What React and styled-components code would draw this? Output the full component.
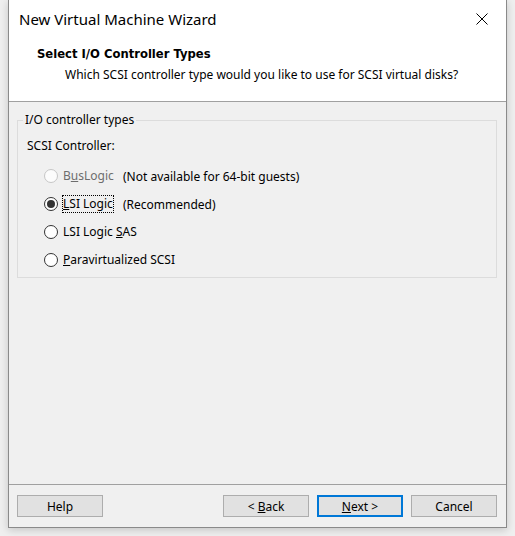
import React from 'react';
import styled, { createGlobalStyle } from 'styled-components';

const GlobalStyle = createGlobalStyle`
    html, body {
        margin: 0;
        padding: 0;
        background: #efefef;
    }
    body {
        font-family: "Noto Sans", "Liberation Sans", sans-serif;
        font-size: 12px;
        color: #000;
    }
`;

const Page = styled.div`
    height: 536px;
    padding-left: 8px;
    box-sizing: border-box;
`;

const Window = styled.div`
    width: 499px;
    height: 528px;
    box-sizing: border-box;
    display: flex;
    flex-direction: column;
    border: 1px solid #8a8a8a;
    border-top: none;
    background: #f0f0f0;
    box-shadow: 0 2px 8px rgba(0, 0, 0, 0.18);
`;

const TitleBar = styled.div`
    height: 38px;
    display: flex;
    align-items: center;
    justify-content: space-between;
    padding-left: 10px;
    background: #fff;
`;

const TitleText = styled.span`
    font-size: 15px;
    color: #000;
`;

const CloseButton = styled.div`
    width: 46px;
    height: 38px;
    display: flex;
    align-items: center;
    justify-content: center;
    margin-right: 1px;
`;

const Header = styled.div`
    height: 64px;
    background: #fff;
    border-bottom: 1px solid #a0a0a0;
    padding-top: 7px;
    box-sizing: border-box;
`;

const HeaderTitle = styled.div`
    font-family: "DejaVu Sans", sans-serif;
    font-weight: bold;
    font-size: 11.6px;
    padding-left: 28px;
    height: 18px;
    line-height: 18px;
`;

const HeaderSub = styled.div`
    padding-left: 56px;
    margin-top: 3px;
    line-height: 18px;
`;

const Body = styled.div`
    flex: 1;
    padding: 10px 9px 0 8px;
`;

const Group = styled.fieldset`
    margin: 0;
    padding: 0 0 8px 9px;
    height: 166px;
    box-sizing: border-box;
    border: 1px solid #dcdcdc;
`;

const Legend = styled.legend`
    padding: 0 2px;
    margin-left: -4px;
    line-height: 16px;
`;

const GroupLabel = styled.div`
    margin-top: 10px;
    line-height: 16px;
    margin-bottom: 8px;
`;

const OptionRow = styled.div`
    display: flex;
    align-items: center;
    height: 28px;
    margin-left: 17px;
    color: ${p => (p.$disabled ? '#6d6d6d' : '#000')};
`;

const Radio = styled.span`
    width: 14px;
    height: 14px;
    border-radius: 50%;
    box-sizing: border-box;
    border: 1px solid ${p => (p.$disabled ? '#c6c6c6' : '#333')};
    background: ${p => (p.$disabled ? '#fcfcfc' : '#fff')};
    display: flex;
    align-items: center;
    justify-content: center;
    flex: none;
    margin-right: 4px;

    &::after {
        content: '';
        width: 8px;
        height: 8px;
        border-radius: 50%;
        background: #333;
        display: ${p => (p.$checked ? 'block' : 'none')};
    }
`;

const LabelSlot = styled.span`
    min-width: ${p => (p.$width ? p.$width + 'px' : 'auto')};
    display: flex;
`;

const OptionLabel = styled.span`
    padding: 0;
    line-height: 16px;
    border: 1px dotted ${p => (p.$focused ? '#000' : 'transparent')};
`;

const Note = styled.span`
    color: #000;
`;

const Footer = styled.div`
    height: 43px;
    box-sizing: border-box;
    border-top: 1px solid #a0a0a0;
    display: flex;
    align-items: flex-start;
    padding: 10px 9px 0 8px;
`;

const Button = styled.button`
    width: 86px;
    height: 22px;
    font-family: inherit;
    font-size: 12px;
    color: #000;
    background: #e1e1e1;
    border: ${p => (p.$default ? '2px solid #0078d7' : '1px solid #adadad')};
    padding: 0;
    margin-left: ${p => p.$gap || 0}px;
`;

const Spacer = styled.div`
    flex: 1;
`;

const CloseIcon = () => (
    <svg width="12" height="12" viewBox="0 0 12 12">
        <path d="M0.5 0.5 L11.5 11.5 M11.5 0.5 L0.5 11.5" stroke="#000" strokeWidth="1" fill="none" />
    </svg>
);

const options = [
    { key: 'bus', label: <>B<u>u</u>sLogic</>, note: '(Not available for 64-bit guests)', disabled: true },
    { key: 'lsi', label: <><u>L</u>SI Logic</>, note: '(Recommended)', checked: true, focused: true },
    { key: 'sas', label: <>LSI Logic <u>S</u>AS</> },
    { key: 'pv', label: <><u>P</u>aravirtualized SCSI</> },
];

export default function App() {
    return (
        <>
            <GlobalStyle />
            <Page>
                <Window>
                    <TitleBar>
                        <TitleText>New Virtual Machine Wizard</TitleText>
                        <CloseButton><CloseIcon /></CloseButton>
                    </TitleBar>
                    <Header>
                        <HeaderTitle>Select I/O Controller Types</HeaderTitle>
                        <HeaderSub>Which SCSI controller type would you like to use for SCSI virtual disks?</HeaderSub>
                    </Header>
                    <Body>
                        <Group>
                            <Legend>I/O controller types</Legend>
                            <GroupLabel>SCSI Controller:</GroupLabel>
                            {options.map(o => (
                                <OptionRow key={o.key} $disabled={o.disabled}>
                                    <Radio $disabled={o.disabled} $checked={o.checked} />
                                    <LabelSlot $width={o.note ? 61 : 0}>
                                        <OptionLabel $focused={o.focused}>{o.label}</OptionLabel>
                                    </LabelSlot>
                                    {o.note && <Note>{o.note}</Note>}
                                </OptionRow>
                            ))}
                        </Group>
                    </Body>
                    <Footer>
                        <Button>Help</Button>
                        <Spacer />
                        <Button>&lt; <u>B</u>ack</Button>
                        <Button $default $gap={8}><u>N</u>ext &gt;</Button>
                        <Button $gap={8}>Cancel</Button>
                    </Footer>
                </Window>
            </Page>
        </>
    );
}
